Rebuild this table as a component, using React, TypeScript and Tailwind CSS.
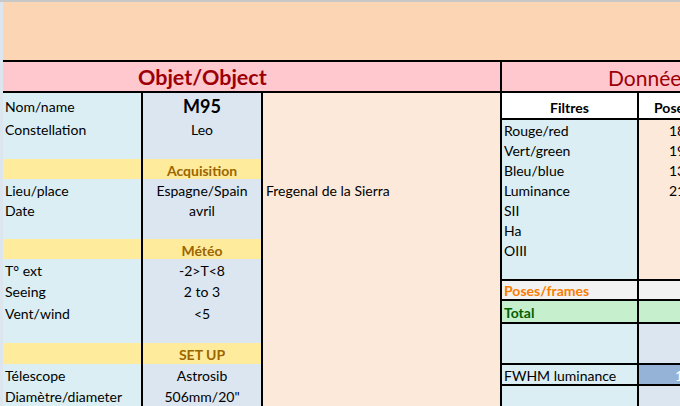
import React from "react";

type LRow = { h: number; a?: string; b?: string; c?: string; y?: boolean; big?: boolean };

const leftRows: LRow[] = [
  { h: 25, a: "Nom/name", b: "M95", big: true },
  { h: 21, a: "Constellation", b: "Leo" },
  { h: 20 },
  { h: 20, y: true, b: "Acquisition" },
  { h: 20, a: "Lieu/place", b: "Espagne/Spain", c: "Fregenal de la Sierra" },
  { h: 20, a: "Date", b: "avril" },
  { h: 20 },
  { h: 20, y: true, b: "Météo" },
  { h: 21, a: "T° ext", b: "-2>T<8" },
  { h: 21, a: "Seeing", b: "2 to 3" },
  { h: 22, a: "Vent/wind", b: "<5" },
  { h: 20 },
  { h: 21, y: true, b: "SET UP" },
  { h: 21, a: "Télescope", b: "Astrosib" },
  { h: 21, a: "Diamètre/diameter", b: '506mm/20"' },
];

const filters: { t: string; v: string; h: number }[] = [
  { t: "Rouge/red", v: "180", h: 20 },
  { t: "Vert/green", v: "190", h: 20 },
  { t: "Bleu/blue", v: "130", h: 20 },
  { t: "Luminance", v: "210", h: 20 },
  { t: "SII", v: "", h: 20 },
  { t: "Ha", v: "", h: 20 },
  { t: "OIII", v: "", h: 20 },
  { t: "", v: "", h: 19 },
];

function Line() {
  return <div className="h-[2px] shrink-0 bg-black" />;
}

export default function App() {
  return (
    <div className="flex w-[680px] h-[406px] overflow-hidden bg-white font-['Lato','Liberation_Sans',sans-serif] text-[14px] text-black">
      <div className="w-[3px] shrink-0 border-t-2 border-[#c8c8c8] bg-[#dde5ef]" />
      <div className="flex w-[677px] shrink-0 flex-col">
        <div className="h-[60px] shrink-0 border-t-2 border-[#c8c8c8] bg-[#fcd5b4]" />
        <Line />
        <div className="flex h-[29px] shrink-0">
          <div className="flex w-[497px] shrink-0 items-center bg-[#ffc7ce] pl-[135px] pt-[2px] text-[21.5px] font-bold text-[#9c0006] whitespace-nowrap">
            Objet/Object
          </div>
          <div className="flex min-w-0 flex-1 items-center overflow-hidden border-l-2 border-black bg-[#ffc7ce] pl-[106px] pt-[2px] text-[21px] text-[#9c0006] whitespace-nowrap">
            Données
          </div>
        </div>
        <Line />
        <div className="flex flex-1">
          {/* left block */}
          <div className="flex w-[497px] shrink-0 flex-col">
            {leftRows.map((r, i) => (
              <div key={i} className="flex shrink-0" style={{ height: r.h }}>
                <div
                  className={`flex w-[140px] shrink-0 items-center border-r-2 border-black pl-[2px] pt-[2px] whitespace-nowrap ${
                    r.y ? "bg-[#ffeb9c]" : "bg-[#daeef3]"
                  }`}
                >
                  {r.a}
                </div>
                <div
                  className={`flex w-[120px] shrink-0 items-center justify-center border-r-2 border-black pt-[2px] whitespace-nowrap ${
                    r.y ? "bg-[#ffeb9c] font-bold text-[#9c6500]" : "bg-[#dce6f1]"
                  } ${r.big ? "text-[18px] font-bold" : ""}`}
                >
                  {r.b}
                </div>
                <div className="flex w-[237px] shrink-0 items-center bg-[#fde9d9] pl-[3px] pt-[2px] whitespace-nowrap">{r.c}</div>
              </div>
            ))}
          </div>
          {/* right block */}
          <div className="flex min-w-0 flex-1 flex-col overflow-hidden border-l-2 border-black">
            <div className="flex h-[25px] shrink-0 bg-white font-bold">
              <div className="flex w-[137px] shrink-0 items-center justify-center border-r-2 border-black pt-[3px]">Filtres</div>
              <div className="flex min-w-0 flex-1 items-center pl-[15px] pt-[3px] whitespace-nowrap">Poses</div>
            </div>
            <Line />
            {filters.map((f, i) => (
              <div key={i} className="flex shrink-0" style={{ height: f.h }}>
                <div className="flex w-[137px] shrink-0 items-center border-r-2 border-black bg-[#daeef3] pl-[2px] whitespace-nowrap">
                  {f.t}
                </div>
                <div className="flex min-w-0 flex-1 items-center bg-[#fde9d9] pl-[30px] whitespace-nowrap">{f.v}</div>
              </div>
            ))}
            <Line />
            <div className="flex h-[18px] shrink-0 bg-[#f2f2f2]">
              <div className="flex w-[137px] shrink-0 items-center border-r-2 border-black pl-[2px] pt-[1px] font-bold text-[#fa7d00] whitespace-nowrap">
                Poses/frames
              </div>
              <div className="min-w-0 flex-1" />
            </div>
            <Line />
            <div className="flex h-[21px] shrink-0 bg-[#c6efce]">
              <div className="flex w-[137px] shrink-0 items-center border-r-2 border-black pl-[2px] pt-[2px] font-bold text-[#006100]">
                Total
              </div>
              <div className="min-w-0 flex-1" />
            </div>
            <Line />
            <div className="flex h-[39px] shrink-0">
              <div className="w-[137px] shrink-0 border-r-2 border-black bg-[#daeef3]" />
              <div className="min-w-0 flex-1 bg-[#dce6f1]" />
            </div>
            <Line />
            <div className="flex h-[19px] shrink-0">
              <div className="flex w-[137px] shrink-0 items-center border-r-2 border-black bg-[#daeef3] pl-[2px] pt-[2px] whitespace-nowrap">
                FWHM luminance
              </div>
              <div className="flex min-w-0 flex-1 items-center bg-[#95b3d7] pl-[36px] pt-[2px] text-white">1</div>
            </div>
            <Line />
            <div className="flex h-[20px] shrink-0">
              <div className="w-[137px] shrink-0 border-r-2 border-black bg-[#daeef3]" />
              <div className="min-w-0 flex-1 bg-[#dce6f1]" />
            </div>
          </div>
        </div>
      </div>
    </div>
  );
}
